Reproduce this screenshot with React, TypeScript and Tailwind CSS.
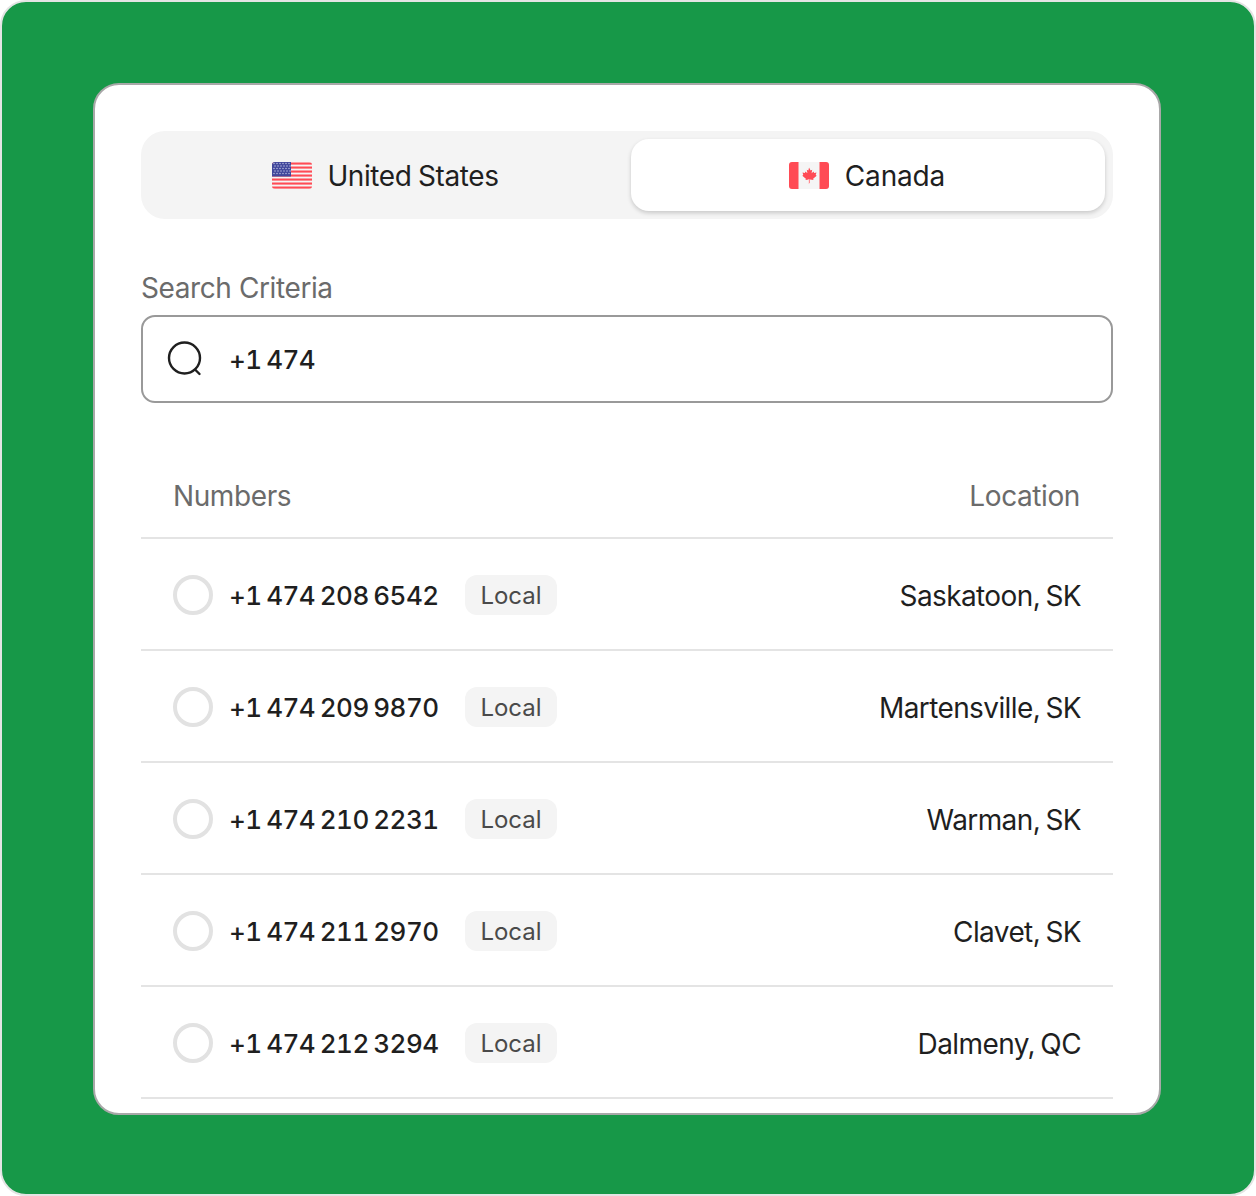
import React from "react";

const rows = [
  { number: "+1 474 208 6542", location: "Saskatoon, SK" },
  { number: "+1 474 209 9870", location: "Martensville, SK" },
  { number: "+1 474 210 2231", location: "Warman, SK" },
  { number: "+1 474 211 2970", location: "Clavet, SK" },
  { number: "+1 474 212 3294", location: "Dalmeny, QC" },
];

const UsFlag = () => (
  <svg width="40" height="27" viewBox="0 0 40 27" className="shrink-0">
    <defs>
      <clipPath id="us-clip">
        <rect width="40" height="27" rx="3" />
      </clipPath>
    </defs>
    <g clipPath="url(#us-clip)">
      <rect width="40" height="27" fill="#f5f5f5" />
      {[0, 4, 8, 12, 16, 20, 24].map((y) => (
        <rect key={y} y={y + 0.5} width="40" height="2.1" fill="#ff4b55" />
      ))}
      <rect width="19" height="14.5" fill="#41479b" />
      {[1.5, 4, 6.5, 9, 11.5].map((y, i) =>
        [2, 5, 8, 11, 14, 17].map((x) => (
          <circle key={`${x}-${y}`} cx={i % 2 ? x + 1 : x} cy={y} r="0.7" fill="#c8cbe8" />
        ))
      )}
    </g>
  </svg>
);

const CaFlag = () => (
  <svg width="40" height="27" viewBox="0 0 40 27" className="shrink-0">
    <defs>
      <clipPath id="ca-clip">
        <rect width="40" height="27" rx="3" />
      </clipPath>
    </defs>
    <g clipPath="url(#ca-clip)">
      <rect width="40" height="27" fill="#f5f5f5" />
      <rect width="9.5" height="27" fill="#ff4b55" />
      <rect x="30.5" width="9.5" height="27" fill="#ff4b55" />
      <path
        d="M20 5.5l1.6 3 1.6-.8-.6 3.6 2-1.9.5 1.5 2.4-.4-.8 2.6 1 .6-3.6 3 .4 1.4-3.5-.5V21h-1v-3.4l-3.5.5.4-1.4-3.6-3 1-.6-.8-2.6 2.4.4.5-1.5 2 1.9-.6-3.6 1.6.8z"
        fill="#ff4b55"
      />
      <rect x="19.5" y="17" width="1" height="5" fill="#ffc9cc" />
    </g>
  </svg>
);

const SearchIcon = () => (
  <svg width="36" height="36" viewBox="0 0 36 36" fill="none" className="shrink-0">
    <circle cx="17.5" cy="17" r="15.5" stroke="#1f1f1f" strokeWidth="2.4" />
    <path d="M28.5 29l4 4" stroke="#1f1f1f" strokeWidth="2.4" strokeLinecap="round" />
  </svg>
);

export default function App() {
  return (
    <div className="w-[1256px] h-[1196px] bg-white font-['Inter',sans-serif]">
      <div className="w-full h-full border-2 border-[#e4e4e4] rounded-[26px] bg-[#179848] pt-[81px] pl-[91px] pr-[93px]">
        <div className="h-[1032px] overflow-hidden bg-white border-2 border-[#a8a8a8] rounded-[26px] px-[46px] pt-[46px]">
          {/* Country tabs */}
          <div className="flex h-[88px] p-2 rounded-[24px] bg-[#f4f4f4]">
            <div className="flex-1 flex items-center justify-center gap-[15px] pr-[9px] text-[28px] tracking-[-0.4px] [word-spacing:-1px] text-[#1f1f1f]">
              <UsFlag />
              <span className="pt-0.5">United States</span>
            </div>
            <div className="w-[474px] flex items-center justify-center gap-4 pr-[2px] text-[28px] tracking-[-0.15px] text-[#1f1f1f] bg-white rounded-[18px] shadow-[0_2px_4px_rgba(0,0,0,0.18)]">
              <CaFlag />
              <span className="pt-0.5">Canada</span>
            </div>
          </div>

          {/* Search */}
          <div className="mt-[50px] h-[38px] flex items-center text-[28px] tracking-[-0.4px] text-[#6b6b6b]">
            Search Criteria
          </div>
          <div className="mt-[8px] h-[88px] flex items-center gap-[26px] px-[24px] border-2 border-[#999999] rounded-[14px]">
            <SearchIcon />
            <span className="text-[26px] font-medium tabular-nums tracking-[-0.5px] [word-spacing:-2px] text-[#1f1f1f]">+1 474</span>
          </div>

          {/* Table */}
          <div className="mt-[36px] h-[100px] flex items-center justify-between pt-4 pl-8 pr-[33px] border-b-2 border-[#e4e4e4] text-[28px] tracking-[-0.4px] text-[#6b6b6b]">
            <span>Numbers</span>
            <span>Location</span>
          </div>
          {rows.map((row) => (
            <div
              key={row.number}
              className="h-[112px] flex items-center pt-0.5 px-8 border-b-2 border-[#e4e4e4]"
            >
              <span className="w-10 h-10 rounded-full border-4 border-[#e2e2e2] shrink-0" />
              <span className="ml-4 w-[236px] text-[26px] font-medium tabular-nums tracking-[-0.5px] [word-spacing:-2px] text-[#1f1f1f] whitespace-nowrap">
                {row.number}
              </span>
              <span className="h-10 w-[92px] flex items-center justify-center pt-0.5 rounded-[12px] bg-[#f4f4f4] text-[24px] text-[#4a4a4a]">
                Local
              </span>
              <span className="ml-auto pt-0.5 text-[28px] tracking-[-0.6px] [word-spacing:-2px] text-[#1f1f1f]">
                {row.location}
              </span>
            </div>
          ))}
        </div>
      </div>
    </div>
  );
}
